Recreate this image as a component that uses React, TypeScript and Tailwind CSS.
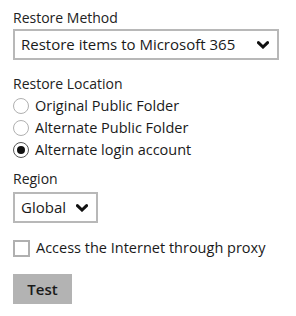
import React from "react";

function Chevron() {
  return (
    <svg width="12" height="8" viewBox="0 0 12 8" className="shrink-0">
      <path d="M1.4 1.6 L6 6 L10.6 1.6" fill="none" stroke="#111" strokeWidth="3" strokeLinecap="round" strokeLinejoin="miter" />
    </svg>
  );
}

function Radio({ label, checked }: { label: string; checked?: boolean }) {
  return (
    <div className="flex items-center h-[22px] gap-[6px]">
      <span
        className={
          checked
            ? "w-[16px] h-[16px] rounded-full border-[1.5px] border-[#555] flex items-center justify-center bg-white"
            : "w-[16px] h-[16px] rounded-full border-[1.5px] border-[#b0b0b0] bg-white"
        }
      >
        {checked && <span className="w-[8px] h-[8px] rounded-full bg-[#111]" />}
      </span>
      <span className="text-[14.5px] text-[#1a1a1a]">{label}</span>
    </div>
  );
}

export default function App() {
  return (
    <div
      className="w-[296px] h-[316px] bg-white px-[13px] pt-[8px]"
      style={{ fontFamily: '"Open Sans", sans-serif' }}
    >
      <p className="text-[14px] leading-[19px] text-[#222]">Restore Method</p>
      <div className="mt-[2px] w-[266px] h-[31px] border-2 border-[#b8b8b8] flex items-center justify-between pl-[6px] pr-[8px]">
        <span className="text-[15px] text-[#1a1a1a]">Restore items to Microsoft 365</span>
        <Chevron />
      </div>

      <p className="mt-[14px] text-[14px] leading-[19px] text-[#222]">Restore Location</p>
      <div className="mt-[2px] flex flex-col">
        <Radio label="Original Public Folder" />
        <Radio label="Alternate Public Folder" />
        <Radio label="Alternate login account" checked />
      </div>

      <p className="mt-[8px] text-[14px] leading-[19px] text-[#222]">Region</p>
      <div className="mt-[4px] w-[85px] h-[31px] border-2 border-[#b8b8b8] flex items-center justify-between pl-[6px] pr-[8px]">
        <span className="text-[15px] text-[#1a1a1a]">Global</span>
        <Chevron />
      </div>

      <div className="mt-[14px] flex items-center h-[22px] gap-[6px]">
        <span className="w-[17px] h-[17px] border-2 border-[#b0b0b0] bg-white" />
        <span className="text-[14.5px] text-[#1a1a1a]">Access the Internet through proxy</span>
      </div>

      <button className="mt-[15px] w-[59px] h-[30px] bg-[#b3b3b3] text-[15px] font-semibold text-[#1a1a1a] flex items-center justify-center">
        Test
      </button>
    </div>
  );
}
